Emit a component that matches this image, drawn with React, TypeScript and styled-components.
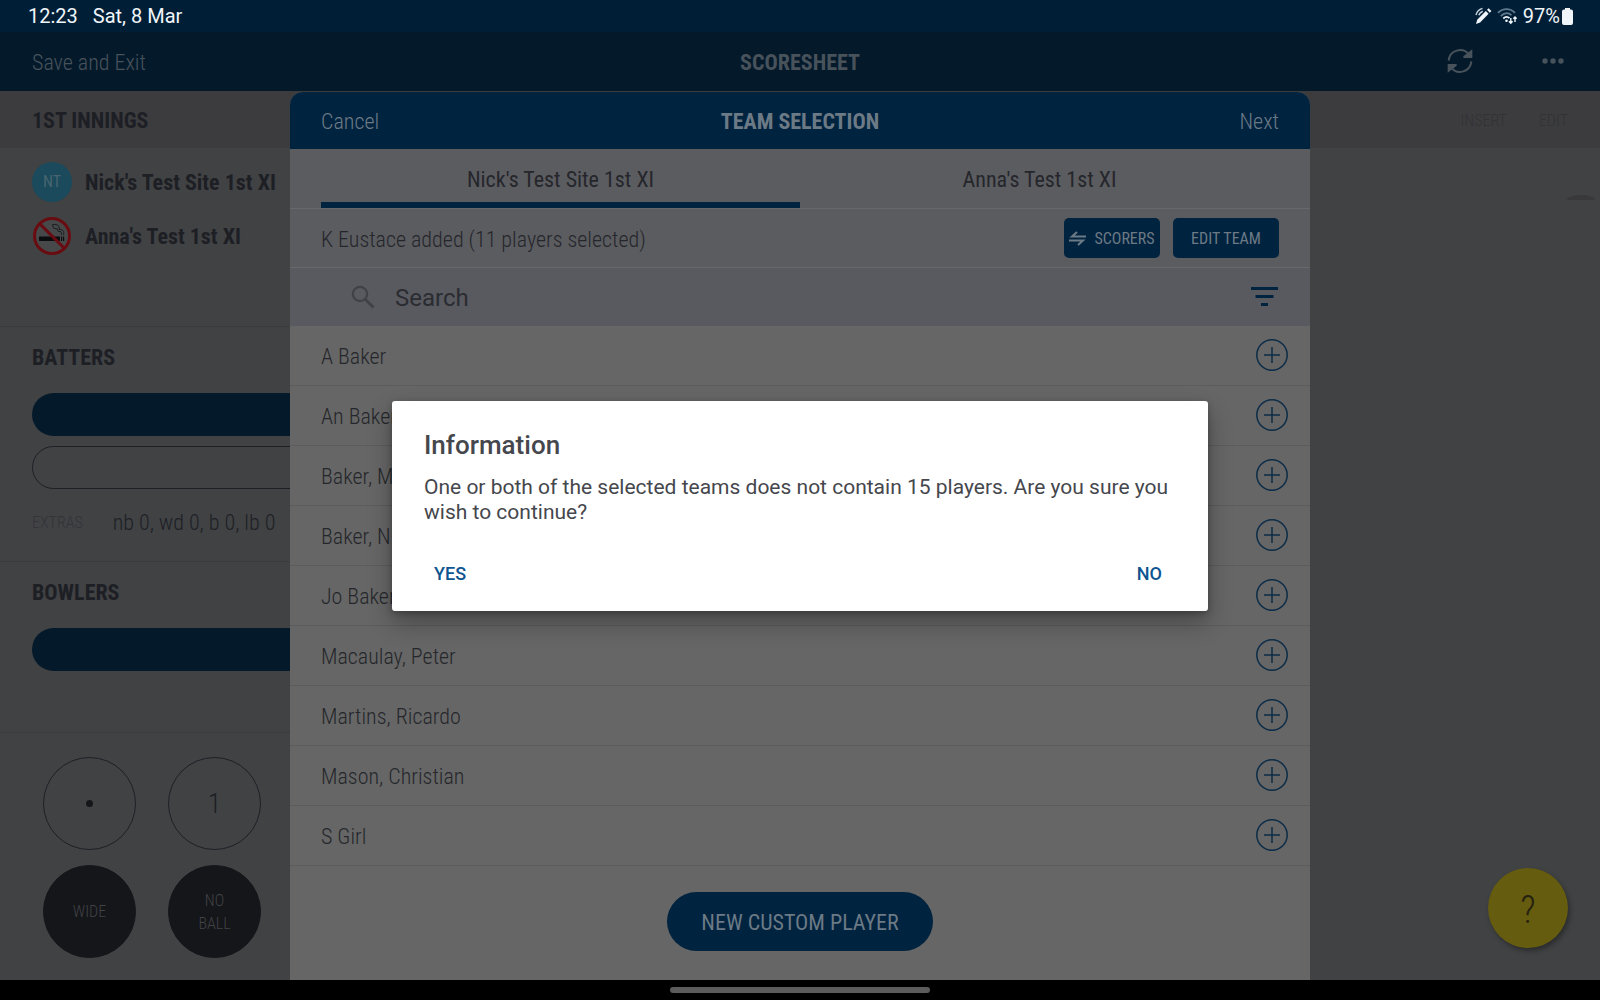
import React from "react";
import styled, { createGlobalStyle, css } from "styled-components";

const condensed = `"Roboto Condensed", "Liberation Sans Narrow", Roboto, sans-serif`;

const Global = createGlobalStyle`
  * { box-sizing: border-box; }
  html, body, #root { height: 100%; }
  body { margin: 0; background: #000; font-family: Roboto, sans-serif; }
  h1, h2, h3, p, ul { margin: 0; padding: 0; font-weight: inherit; font-size: inherit; }
  button { margin: 0; padding: 0; border: 0; background: none; color: inherit; font: inherit; cursor: pointer; }
  svg { display: block; flex: none; }
`;

const Screen = styled.div`
  position: relative;
  min-height: 100vh;
  display: flex;
  flex-direction: column;
  overflow: hidden;
  font-family: ${condensed};
  font-size: 22px;
  line-height: 28px;
  font-weight: 300;
`;

const StatusBar = styled.header`
  height: 32px;
  flex: none;
  display: flex;
  align-items: center;
  justify-content: space-between;
  padding: 0 27px 0 28px;
  background: #001f37;
  color: #f0f5f9;
  font-family: Roboto, sans-serif;
  font-size: 20px;
  font-weight: 400;
`;
const StatusGroup = styled.div<{ $gap: number }>`
  display: flex;
  align-items: center;
  gap: ${(p) => p.$gap}px;
`;

const NavBar = styled.nav`
  height: 59px;
  flex: none;
  display: grid;
  grid-template-columns: 1fr auto 1fr;
  align-items: center;
  padding: 2px 32px 0;
  background: #041a2b;
  color: #48525b;
`;
const Side = styled.div<{ $end?: boolean }>`
  display: flex;
  align-items: center;
  justify-content: ${(p) => (p.$end ? "flex-end" : "flex-start")};
`;
const NavIcons = styled(Side)`
  gap: 69px;
  padding: 0 4px 4px 0;
`;
const Title = styled.h1`
  font-weight: 700;
`;

const Main = styled.main`
  position: relative;
  flex: 1;
  display: flex;
  flex-direction: column;
  background: #414244;
  color: #1d1f25;
`;
const InningsBar = styled.div`
  height: 57px;
  flex: none;
  display: flex;
  align-items: center;
  justify-content: space-between;
  padding: 2px 32px 0;
  background: #3c3c3f;
  font-weight: 700;
`;
const BarActions = styled.div`
  display: flex;
  gap: 32px;
  color: #323236;
  font-size: 16px;
  font-weight: 300;
`;

const Columns = styled.div`
  flex: 1;
  display: flex;
  justify-content: space-between;
`;
const Panel = styled.aside`
  width: 400px;
  display: flex;
  flex-direction: column;
`;
const Section = styled.section<{ $h: number }>`
  height: ${(p) => p.$h}px;
  padding: 0 32px;
  border-bottom: 1px solid #3a3b3d;
`;
const SectionTitle = styled.h2`
  padding: 17px 0 21px;
  font-weight: 700;
`;
const Teams = styled.ul`
  list-style: none;
  padding: 14px 0 0;
  display: grid;
  gap: 14px;
`;
const Team = styled.li`
  display: flex;
  align-items: center;
  gap: 13px;
  font-weight: 700;
`;
const TeamName = styled.span`
  padding-top: 2px;
`;
const Avatar = styled.span`
  width: 40px;
  height: 40px;
  border-radius: 50%;
  display: grid;
  place-items: center;
  background: #1a4a5c;
  color: #48656f;
  font-size: 16px;
  font-weight: 400;
`;
const Pill = styled.button<{ $outline?: boolean }>`
  display: block;
  width: 100%;
  height: 43px;
  margin-bottom: 10px;
  border-radius: 22px;
  ${(p) =>
    p.$outline
      ? css`
          border: 1px solid #1d1f25;
        `
      : css`
          background: #041a2b;
        `}
`;
const Extras = styled.div`
  display: flex;
  align-items: center;
  gap: 30px;
  padding-top: 10px;
`;
const ExtrasLabel = styled.span`
  color: #33343a;
  font-size: 16px;
`;
const Keypad = styled.div`
  display: grid;
  grid-template-columns: 93px 93px;
  gap: 15px 32px;
  padding: 24px 43px 0;
`;
const Key = styled.button<{ $solid?: boolean }>`
  width: 93px;
  height: 93px;
  border-radius: 50%;
  display: grid;
  place-items: center;
  font-size: ${(p) => (p.$solid ? 16 : 28)}px;
  line-height: 23px;
  border: 1px solid ${(p) => (p.$solid ? "#15161a" : "#1d1f25")};
  background: ${(p) => (p.$solid ? "#15161a" : "transparent")};
  color: ${(p) => (p.$solid ? "#414246" : "#1d1f25")};
`;
const Dot = styled.span`
  width: 7px;
  height: 7px;
  border-radius: 50%;
  background: #15161a;
`;
const Knob = styled.div`
  padding: 47px 5px 0 0;
`;
const KnobArc = styled.div`
  width: 28px;
  height: 5px;
  border-radius: 50% 50% 0 0 / 100% 100% 0 0;
  background: #39393c;
`;

const SheetLayer = styled.div`
  position: absolute;
  inset: 1px 0 0;
  display: flex;
  justify-content: center;
`;
const Sheet = styled.section`
  width: 1020px;
  max-width: 100%;
  display: flex;
  flex-direction: column;
  border-radius: 13px 13px 0 0;
  overflow: hidden;
  background: #666;
  color: #25262b;
`;
const SheetHeader = styled.header`
  height: 57px;
  flex: none;
  display: grid;
  grid-template-columns: 1fr auto 1fr;
  align-items: center;
  padding: 2px 31px 0;
  background: #00233f;
  color: #6c7a86;
`;
const Tabs = styled.div`
  height: 60px;
  flex: none;
  display: grid;
  grid-template-columns: 1fr 1fr;
  padding: 0 31px;
  background: #5b5c60;
  border-bottom: 1px solid #66686b;
`;
const Tab = styled.button<{ $active?: boolean }>`
  padding-top: 8px;
  border-bottom: 6px solid ${(p) => (p.$active ? "#00233f" : "transparent")};
  font-weight: 400;
`;
const Row = styled.div`
  height: 59px;
  flex: none;
  display: flex;
  align-items: center;
  padding: 4px 31px 0;
  background: #5b5c60;
  border-bottom: 1px solid #66686b;
`;
const Message = styled.p`
  flex: 1;
`;
const SmallButton = styled.button<{ $w: number }>`
  width: ${(p) => p.$w}px;
  height: 40px;
  margin: 0 0 5px 13px;
  padding-top: 2px;
  display: flex;
  align-items: center;
  justify-content: center;
  gap: 8px;
  border-radius: 5px;
  background: #00233f;
  color: #6c7a86;
  font-size: 16px;
  font-weight: 400;
`;
const SearchBar = styled.div`
  height: 58px;
  flex: none;
  display: flex;
  align-items: center;
  padding: 0 31px 0 61px;
  background: #595a60;
`;
const SearchInput = styled.input`
  flex: 1;
  min-width: 0;
  margin-left: 20px;
  padding: 2px 0 0;
  border: 0;
  outline: 0;
  background: none;
  color: #2b2c31;
  font-family: Roboto, sans-serif;
  font-size: 24px;
  font-weight: 400;
  &::placeholder { color: #2b2c31; opacity: 1; }
`;
const Players = styled.ul`
  list-style: none;
`;
const Player = styled.li`
  height: 60px;
  display: flex;
  align-items: center;
  justify-content: space-between;
  padding: 0 22px 0 31px;
  border-bottom: 1px solid #5c5c5c;
`;
const PlayerName = styled.span`
  padding-top: 2px;
`;
const AddButton = styled.button`
  padding-bottom: 2px;
`;
const SheetFooter = styled.footer`
  flex: 1;
  display: flex;
  justify-content: center;
  padding-top: 26px;
`;
const NewPlayer = styled.button`
  width: 266px;
  height: 59px;
  padding-top: 2px;
  border-radius: 30px;
  background: #00233f;
  color: #6c7a86;
  font-weight: 400;
`;

const Help = styled.button`
  position: absolute;
  right: 32px;
  bottom: 32px;
  width: 80px;
  height: 80px;
  padding-top: 4px;
  border-radius: 50%;
  background: #665c0f;
  color: #25220f;
  font-size: 38px;
  box-shadow: 2px 3px 5px rgba(0, 0, 0, 0.35);
`;

const GestureBar = styled.div`
  height: 20px;
  flex: none;
  display: grid;
  place-items: center;
  background: #000;
`;
const Handle = styled.div`
  width: 260px;
  height: 6px;
  border-radius: 3px;
  background: #5c5c5c;
`;

const DialogLayer = styled.div`
  position: absolute;
  inset: 12px 0 0;
  display: grid;
  place-items: center;
`;
const Dialog = styled.div`
  width: 816px;
  max-width: 100%;
  padding: 28px 32px 17px;
  border-radius: 3px;
  background: #fff;
  color: #45474d;
  font-family: Roboto, sans-serif;
  font-size: 21px;
  line-height: 25px;
  font-weight: 400;
  box-shadow: 0 12px 24px rgba(0, 0, 0, 0.3), 0 2px 6px rgba(0, 0, 0, 0.25);
`;
const DialogTitle = styled.h2`
  margin-bottom: 14px;
  font-size: 26px;
  line-height: 32px;
  font-weight: 500;
`;
const DialogActions = styled.div`
  display: flex;
  justify-content: space-between;
  padding: 29px 4px 0 0;
`;
const DialogButton = styled.button`
  padding: 10px;
  color: #0d5490;
  font-size: 18px;
  line-height: 20px;
  font-weight: 500;
`;

const PenIcon = () => (
  <svg width="17" height="18" viewBox="0 0 17 18" fill="none" aria-hidden="true">
    <path d="M1 17l1.200-4.200L10.800 4l2.800 2.800-8.500 8.800z M12 2.800l1.600-1.500 2.800 2.800-1.600 1.600z" fill="#f0f5f9" />
    <path d="M1 8C1.800 4.800 4 2.400 7.500 1.400M3.800 8.200C4.500 6.300 5.800 5 7.800 4.200" stroke="#c5d0da" strokeWidth="1.500" />
  </svg>
);
const WifiIcon = () => (
  <svg width="21" height="18" viewBox="0 0 21 18" fill="none" aria-hidden="true">
    <path d="M1 5.800C6 .8 13 .8 18 5.800M3.800 9C7.500 5.500 11.500 5.500 14.500 8.200" stroke="#60788b" strokeWidth="1.800" />
    <path d="M6.300 11.500C8.300 9.500 10.700 9.500 12.500 11.200" stroke="#f0f5f9" strokeWidth="1.800" />
    <circle cx="9.500" cy="13.800" r="1.300" fill="#f0f5f9" />
    <path d="M13.800 11v5M12 14.200l1.800 2 1.800-2M18 15V10M16.400 11.700L18 10l1.600 1.700" stroke="#f0f5f9" strokeWidth="1.400" />
  </svg>
);
const BatteryIcon = () => (
  <svg width="11" height="17" viewBox="0 0 11 17" aria-hidden="true">
    <path d="M3 0h5v1.500h1A2 2 0 0 1 11 3.500V15a2 2 0 0 1-2 2H2a2 2 0 0 1-2-2V3.500A2 2 0 0 1 2 1.500h1z" fill="#f0f5f9" />
  </svg>
);
const SyncIcon = () => (
  <svg width="26" height="26" viewBox="0 0 78 78" aria-hidden="true">
    <path d="M5 38A34 34 0 0 1 66 20M73 40A34 34 0 0 1 12 58" fill="none" stroke="#48525b" strokeWidth="6" />
    <path d="M76 4v26H49v-5zM2 74V48h27v5z" fill="#48525b" />
  </svg>
);
const MoreIcon = () => (
  <svg width="22" height="6" viewBox="0 0 22 6" fill="#48525b" aria-hidden="true">
    <circle cx="3" cy="3" r="2.700" />
    <circle cx="11" cy="3" r="2.700" />
    <circle cx="19" cy="3" r="2.700" />
  </svg>
);
const NoSmokingIcon = () => (
  <svg width="40" height="40" viewBox="0 0 40 40" fill="none" aria-hidden="true">
    <circle cx="20" cy="20" r="18" fill="#47484a" />
    <path d="M7 20.500h21v4.500H7zM29 20.500h1.200v4.500H29zM31 20.500h1.200v4.500H31z" fill="#0b0c0e" />
    <path d="M31.500 19c1-4-1-6-4.500-5.500 1-3.500-1-5.500-6.500-5l1 3.500c1.500 1 3.500.5 4 1 0 2 .5 3 2.500 2.500 1.500 0 1.500 1.500 1.500 3.500" stroke="#1a1b1d" strokeWidth="1" />
    <circle cx="20" cy="20" r="17.500" stroke="#680c12" strokeWidth="3" />
    <path d="M7.600 7.600l24.800 24.800" stroke="#680c12" strokeWidth="3" />
  </svg>
);
const SwapIcon = () => (
  <svg width="17" height="15" viewBox="0 0 17 15" fill="none" stroke="#6c7a86" strokeWidth="2" aria-hidden="true">
    <path d="M17 5.500H3l5-4.500M0 9.500h14L9 14" />
  </svg>
);
const SearchIcon = () => (
  <svg width="24" height="24" viewBox="0 0 24 24" fill="none" stroke="#414246" strokeWidth="2.200" aria-hidden="true">
    <circle cx="9" cy="9" r="7.200" />
    <path d="M14.500 14.500l8 8" strokeWidth="3" />
  </svg>
);
const FilterIcon = () => (
  <svg width="28" height="20" viewBox="0 0 28 20" fill="#00233f" aria-hidden="true">
    <path d="M0 0h27v3H0zM4.500 8h18v3h-18zM10 16h7v3h-7z" />
  </svg>
);
const PlusIcon = () => (
  <svg width="32" height="32" viewBox="0 0 32 32" fill="none" stroke="#0c2c47" strokeWidth="1.500" aria-hidden="true">
    <circle cx="16" cy="16" r="15.200" />
    <path d="M16 8v16M8 16h16" />
  </svg>
);

const players = [
  "A Baker",
  "An Baker",
  "Baker, M",
  "Baker, N",
  "Jo Baker",
  "Macaulay, Peter",
  "Martins, Ricardo",
  "Mason, Christian",
  "S Girl",
];

export default function App() {
  return (
    <Screen>
      <Global />
      <StatusBar>
        <StatusGroup $gap={15}>
          <span>12:23</span>
          <span>Sat, 8 Mar</span>
        </StatusGroup>
        <StatusGroup $gap={5}>
          <PenIcon />
          <WifiIcon />
          <StatusGroup $gap={2}>
            <span>97%</span>
            <BatteryIcon />
          </StatusGroup>
        </StatusGroup>
      </StatusBar>
      <NavBar>
        <Side>
          <button>Save and Exit</button>
        </Side>
        <Title>SCORESHEET</Title>
        <NavIcons $end>
          <button aria-label="Refresh"><SyncIcon /></button>
          <button aria-label="More"><MoreIcon /></button>
        </NavIcons>
      </NavBar>
      <Main>
        <InningsBar>
          <h2>1ST INNINGS</h2>
          <BarActions>
            <button>INSERT</button>
            <button>EDIT</button>
          </BarActions>
        </InningsBar>
        <Columns>
          <Panel>
            <Section $h={179}>
              <Teams>
                <Team><Avatar>NT</Avatar><TeamName>Nick's Test Site 1st XI</TeamName></Team>
                <Team><NoSmokingIcon /><TeamName>Anna's Test 1st XI</TeamName></Team>
              </Teams>
            </Section>
            <Section $h={235}>
              <SectionTitle>BATTERS</SectionTitle>
              <Pill aria-label="Batter on strike" />
              <Pill $outline aria-label="Batter off strike" />
              <Extras>
                <ExtrasLabel>EXTRAS</ExtrasLabel>
                <span>nb 0, wd 0, b 0, lb 0</span>
              </Extras>
            </Section>
            <Section $h={171}>
              <SectionTitle>BOWLERS</SectionTitle>
              <Pill aria-label="Bowler" />
            </Section>
            <Keypad>
              <Key aria-label="Dot ball"><Dot /></Key>
              <Key>1</Key>
              <Key $solid>WIDE</Key>
              <Key $solid>NO<br />BALL</Key>
            </Keypad>
          </Panel>
          <Knob><KnobArc /></Knob>
        </Columns>
        <SheetLayer>
          <Sheet>
            <SheetHeader>
              <Side><button>Cancel</button></Side>
              <Title as="h2">TEAM SELECTION</Title>
              <Side $end><button>Next</button></Side>
            </SheetHeader>
            <Tabs role="tablist">
              <Tab role="tab" aria-selected="true" $active>Nick's Test Site 1st XI</Tab>
              <Tab role="tab" aria-selected="false">Anna's Test 1st XI</Tab>
            </Tabs>
            <Row>
              <Message>K Eustace added (11 players selected)</Message>
              <SmallButton $w={96}><SwapIcon />SCORERS</SmallButton>
              <SmallButton $w={106}>EDIT TEAM</SmallButton>
            </Row>
            <SearchBar>
              <SearchIcon />
              <SearchInput type="search" placeholder="Search" aria-label="Search players" />
              <button aria-label="Filter"><FilterIcon /></button>
            </SearchBar>
            <Players>
              {players.map((name) => (
                <Player key={name}>
                  <PlayerName>{name}</PlayerName>
                  <AddButton aria-label={`Add ${name}`}><PlusIcon /></AddButton>
                </Player>
              ))}
            </Players>
            <SheetFooter>
              <NewPlayer>NEW CUSTOM PLAYER</NewPlayer>
            </SheetFooter>
          </Sheet>
        </SheetLayer>
        <Help>?</Help>
      </Main>
      <GestureBar><Handle /></GestureBar>
      <DialogLayer>
        <Dialog role="alertdialog" aria-labelledby="dialog-title">
          <DialogTitle id="dialog-title">Information</DialogTitle>
          <p>One or both of the selected teams does not contain 15 players. Are you sure you wish to continue?</p>
          <DialogActions>
            <DialogButton>YES</DialogButton>
            <DialogButton>NO</DialogButton>
          </DialogActions>
        </Dialog>
      </DialogLayer>
    </Screen>
  );
}
